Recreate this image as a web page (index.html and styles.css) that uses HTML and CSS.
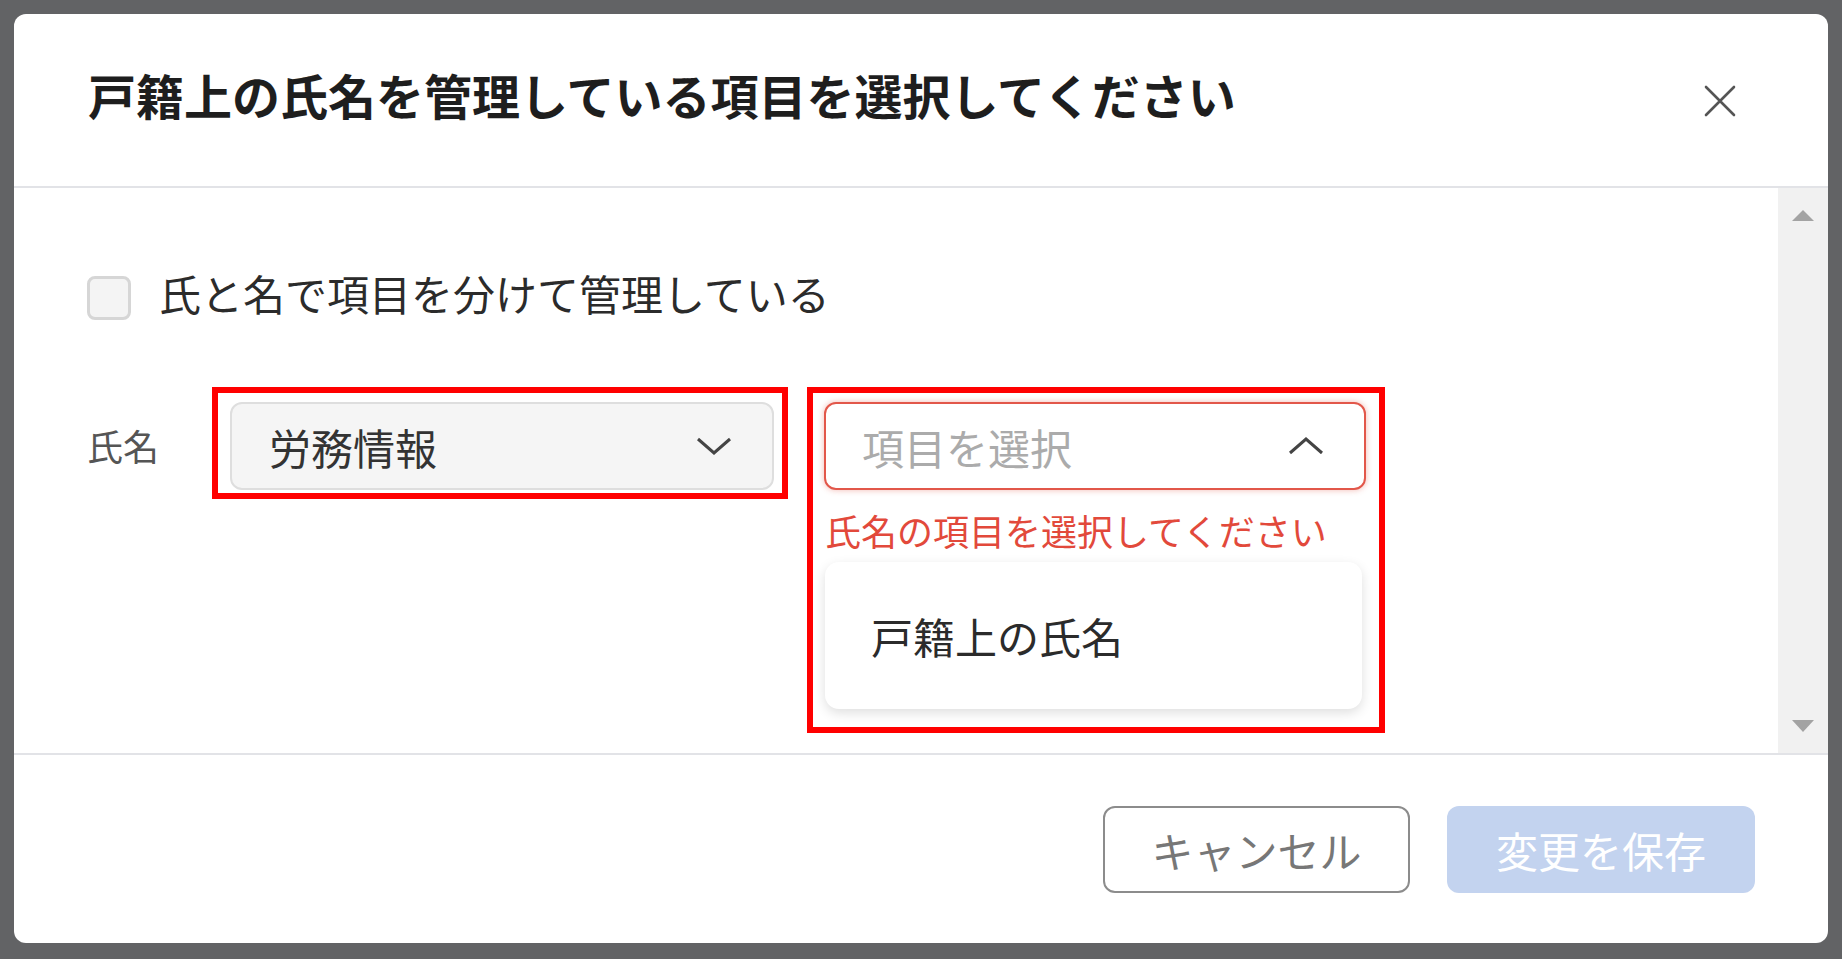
FILE: index.html
```html
<!DOCTYPE html>
<html lang="ja">
<head>
    <meta charset="UTF-8">
    <meta name="viewport" content="width=device-width, initial-scale=1.0">
    <title>戸籍上の氏名</title>
    <link rel="stylesheet" href="styles.css">
</head>
<body>

<div class="overlay">
    <div class="modal">
        <header class="modal-header">
            <h1 class="modal-title">戸籍上の氏名を管理している項目を選択してください</h1>
            <button class="close-button" aria-label="閉じる">
                <svg width="32" height="32" viewBox="0 0 32 32">
                    <path d="M2 2 L30 30 M30 2 L2 30" stroke="#555" stroke-width="2.6" fill="none" stroke-linecap="round"/>
                </svg>
            </button>
        </header>

        <div class="modal-body">
            <div class="body-content">
                <label class="check-row">
                    <span class="checkbox"></span>
                    <span class="check-label">氏と名で項目を分けて管理している</span>
                </label>

                <div class="field-row">
                    <span class="field-label">氏名</span>

                    <!-- red boxes are the annotation marks of the screenshot -->
                    <div class="mark mark-first">
                        <div class="select">
                            <span class="select-value">労務情報</span>
                            <svg class="chevron" width="36" height="18" viewBox="0 0 36 18">
                                <polyline points="2,2 18,16 34,2" stroke="#444" stroke-width="3" fill="none"/>
                            </svg>
                        </div>
                    </div>

                    <div class="mark mark-second">
                        <div class="select select-error">
                            <span class="select-placeholder">項目を選択</span>
                            <svg class="chevron" width="36" height="18" viewBox="0 0 36 18">
                                <polyline points="2,16 18,2 34,16" stroke="#444" stroke-width="3" fill="none"/>
                            </svg>
                        </div>
                        <p class="error-text">氏名の項目を選択してください</p>
                        <ul class="dropdown">
                            <li class="dropdown-item">戸籍上の氏名</li>
                        </ul>
                    </div>
                </div>
            </div>

            <div class="scrollbar">
                <span class="scroll-up"></span>
                <span class="scroll-down"></span>
            </div>
        </div>

        <footer class="modal-footer">
            <button class="btn btn-cancel">キャンセル</button>
            <button class="btn btn-save" disabled>変更を保存</button>
        </footer>
    </div>
</div>

</body>
</html>
```

FILE: styles.css
```css
body {
    margin: 0;
    padding: 0;
    background-color: #626365;
    font-family: "Noto Sans CJK JP", "Noto Sans", sans-serif;
    color: #333;
}

.overlay {
    padding: 14px;
    height: 959px;
    box-sizing: border-box;
}

.modal {
    width: 1814px;
    height: 929px;
    background-color: #fff;
    border-radius: 12px;
    display: flex;
    flex-direction: column;
    overflow: hidden;
}

/* header */
.modal-header {
    height: 174px;
    flex-shrink: 0;
    display: flex;
    align-items: center;
    justify-content: space-between;
    padding: 0 92px 10px 74px;
    box-sizing: border-box;
    border-bottom: 2px solid #e2e3e7;
}

.modal-title {
    margin: 0;
    font-size: 48px;
    font-weight: bold;
    line-height: 1.2;
    color: #1e1e1e;
}

.close-button {
    background: none;
    border: none;
    padding: 0;
    margin-top: 12px;
    width: 32px;
    height: 32px;
    cursor: pointer;
}

.close-button svg {
    display: block;
}

/* body */
.modal-body {
    flex: 1;
    display: flex;
    min-height: 0;
}

.body-content {
    flex: 1;
    padding: 83px 0 0 73px;
}

.check-row {
    display: flex;
    align-items: center;
    gap: 28px;
}

.checkbox {
    width: 44px;
    height: 44px;
    box-sizing: border-box;
    border: 3px solid #d6d6d6;
    border-radius: 8px;
    background-color: #f4f4f4;
}

.check-label {
    font-size: 42px;
    line-height: 44px;
    padding-bottom: 10px;
    color: #2b2b2b;
}

.field-row {
    display: flex;
    align-items: flex-start;
    margin-top: 62px;
}

.field-label {
    width: 125px;
    margin-top: 40px;
    font-size: 36px;
    line-height: 36px;
    color: #555;
}

.mark {
    border: 6px solid #ff0000;
}

.mark-first {
    padding: 9px 8px 3px 12px;
}

.mark-second {
    margin-left: 19px;
    padding: 9px 13px 18px 11px;
}

.select {
    height: 88px;
    box-sizing: border-box;
    border: 2px solid #dedede;
    border-radius: 12px;
    background-color: #f5f5f5;
    display: flex;
    align-items: center;
    justify-content: space-between;
    padding: 0 40px 0 37px;
    font-size: 42px;
}

.mark-first .select {
    width: 544px;
}

.mark-second .select {
    width: 542px;
}

.select-value {
    color: #333;
}

.select-error {
    background-color: #fff;
    border-color: #e2574a;
    box-shadow: 0 0 6px rgba(226, 80, 64, 0.4);
    padding-left: 36px;
}

.select-placeholder {
    color: #ababab;
}

.chevron {
    display: block;
}

.error-text {
    margin: 18px 0 0 1px;
    font-size: 36px;
    line-height: 44px;
    color: #e2493b;
}

.dropdown {
    list-style: none;
    margin: 10px 0 0 1px;
    padding: 0;
    width: 537px;
    background-color: #fff;
    border-radius: 14px;
    box-shadow: 0 4px 12px rgba(0, 0, 0, 0.13);
}

.dropdown-item {
    height: 147px;
    display: flex;
    align-items: center;
    padding: 0 46px;
    font-size: 42px;
    color: #2b2b2b;
}

.scrollbar {
    width: 50px;
    flex-shrink: 0;
    background-color: #f1f1f1;
    display: flex;
    flex-direction: column;
    align-items: center;
    justify-content: space-between;
    padding: 22px 0 21px;
    box-sizing: border-box;
}

.scroll-up {
    width: 0;
    height: 0;
    border-left: 11px solid transparent;
    border-right: 11px solid transparent;
    border-bottom: 11px solid #a3a3a3;
}

.scroll-down {
    width: 0;
    height: 0;
    border-left: 11px solid transparent;
    border-right: 11px solid transparent;
    border-top: 12px solid #a3a3a3;
}

/* footer */
.modal-footer {
    height: 190px;
    flex-shrink: 0;
    box-sizing: border-box;
    border-top: 2px solid #e2e3e7;
    display: flex;
    align-items: center;
    justify-content: flex-end;
    gap: 37px;
    padding-right: 73px;
}

.btn {
    height: 87px;
    border-radius: 12px;
    font-family: inherit;
    font-size: 42px;
    cursor: pointer;
}

.btn-cancel {
    width: 307px;
    background-color: #fff;
    border: 2px solid #8c8c8c;
    color: #777;
}

.btn-save {
    width: 308px;
    background-color: #c3d3ef;
    border: none;
    color: #fff;
}
```
